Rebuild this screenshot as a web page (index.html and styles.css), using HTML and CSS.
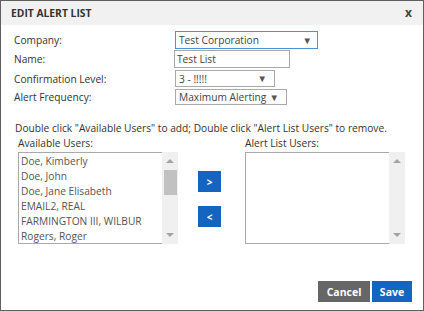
FILE: index.html
```html
<!DOCTYPE html>
<html>
<head>
<meta charset="utf-8">
<link rel="stylesheet" href="styles.css">
</head>
<body>
<div class="dialog">
  <div class="header">
    <span class="title">EDIT ALERT LIST</span>
    <span class="close">x</span>
  </div>
  <div class="form">
    <div class="row r1">
      <span class="label">Company:</span>
      <div class="select focus w143"><span>Test Corporation</span><span class="arr">▼</span></div>
    </div>
    <div class="row r2">
      <span class="label">Name:</span>
      <div class="input">Test List</div>
    </div>
    <div class="row r3">
      <span class="label">Confirmation Level:</span>
      <div class="select w100"><span>3 - !!!!!</span><span class="arr">▼</span></div>
    </div>
    <div class="row r4">
      <span class="label">Alert Frequency:</span>
      <div class="select w112"><span>Maximum Alerting</span><span class="arr">▼</span></div>
    </div>
  </div>
  <p class="hint">Double click "Available Users" to add; Double click "Alert List Users" to remove.</p>
  <div class="lists">
    <div class="col left">
      <div class="collabel">Available Users:</div>
      <div class="listbox">
        <div class="items">
          <div class="item">Doe, Kimberly</div>
          <div class="item">Doe, John</div>
          <div class="item">Doe, Jane Elisabeth</div>
          <div class="item">EMAIL2, REAL</div>
          <div class="item">FARMINGTON III, WILBUR</div>
          <div class="item">Rogers, Roger</div>
        </div>
        <div class="scroll">
          <span class="up"></span>
          <span class="thumb"></span>
          <span class="down"></span>
        </div>
      </div>
    </div>
    <div class="mid">
      <div class="abtn">&gt;</div>
      <div class="abtn">&lt;</div>
    </div>
    <div class="col right">
      <div class="collabel">Alert List Users:</div>
      <div class="listbox rl">
        <div class="items"></div>
        <div class="scroll">
          <span class="up"></span>
          <span class="down"></span>
        </div>
      </div>
    </div>
  </div>
  <div class="footer">
    <div class="btn cancel">Cancel</div>
    <div class="btn save">Save</div>
  </div>
</div>
</body>
</html>
```
FILE: styles.css
```css
* { box-sizing: border-box; }
html, body { margin: 0; padding: 0; background: #fff; }
body { font-family: "Open Sans", "Liberation Sans", sans-serif; font-size: 10.2px; color: #333; }
.dialog { width: 424px; height: 311px; border: 1px solid #5f5f5f; position: relative; background: #fff; }
.header { height: 24px; background: #f1f1f1; display: flex; align-items: center; justify-content: space-between; padding: 0 11px 0 10px; }
.title { font-weight: bold; font-size: 10.3px; color: #333; }
.close { font-weight: bold; font-size: 12px; color: #444; margin-top: -1px; }
.form { padding: 6px 0 0 13px; }
.row { display: grid; grid-template-columns: 161px auto; align-items: center; white-space: nowrap; }
.label { color: #333; }
.r1 { height: 18px; }
.r2 { height: 18px; margin-top: 1px; }
.r3 { height: 17px; margin-top: 2px; }
.r4 { height: 16px; margin-top: 2px; }
.select { display: flex; justify-content: space-between; align-items: center; border: 1px solid #a9a9a9; padding: 0 7px 0 3px; color: #444; height: 100%; white-space: nowrap; overflow: hidden; }
.select.focus { border-color: #4d90e0; padding-right: 5px; }
.arr { font-size: 9.5px; color: #555; }
.w143 { width: 143px; }
.w100 { width: 100px; }
.w112 { width: 112px; }
.input { width: 116px; height: 100%; border: 1px solid #a9a9a9; padding: 0 2px; color: #444; display: flex; align-items: center; margin-left: -1px; }
.hint { margin: 16px 0 0 14px; line-height: 15px; color: #333; }
.lists { display: flex; margin-top: 0; padding-left: 16px; }
.col { display: flex; flex-direction: column; }
.collabel { line-height: 15px; margin-left: 1px; color: #333; }
.right .collabel { margin-left: 0; }
.listbox { display: flex; height: 92px; margin-top: 1px; border: 1px solid #a9a9a9; border-right: 0; }
.left .listbox { width: 160px; margin-left: 1px; }
.listbox .items { flex: 1; padding: 0 0 0 2px; color: #555; }
.item { height: 15px; line-height: 15px; white-space: nowrap; }
.item:first-child { margin-top: 1px; }
.scroll { width: 16px; background: #f0f0f0; position: relative; margin-top: -1px; margin-bottom: -1px; }
.up, .down { position: absolute; left: 4px; width: 0; height: 0; border-left: 4px solid transparent; border-right: 4px solid transparent; }
.up { top: 7px; border-bottom: 4px solid #a3a3a3; }
.down { bottom: 7px; border-top: 4px solid #a3a3a3; }
.thumb { position: absolute; left: 2px; width: 13px; top: 18px; height: 25px; background: #c1c1c1; }
.mid { width: 67px; display: flex; flex-direction: column; padding: 35px 0 0 20px; }
.abtn { width: 23px; height: 21px; background: #1565c0; color: #fff; display: flex; align-items: center; justify-content: center; font-size: 10px; font-weight: bold; }
.abtn + .abtn { margin-top: 14px; }
.rl { width: 160px; }
.footer { position: absolute; right: 11px; bottom: 8px; display: flex; gap: 2px; }
.btn { height: 21px; color: #fff; font-weight: bold; display: flex; align-items: center; justify-content: center; font-size: 10.5px; }
.cancel { width: 52px; background: #666; }
.save { width: 40px; background: #1565c0; }
```
